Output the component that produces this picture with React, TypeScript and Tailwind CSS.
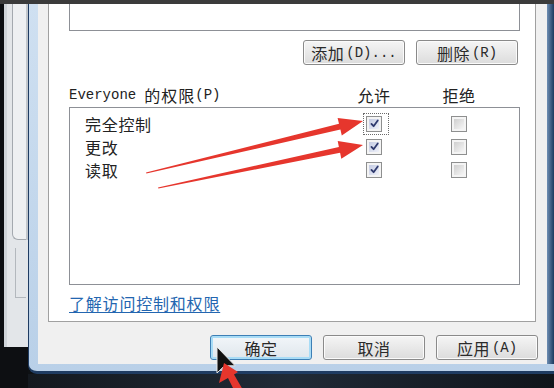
import React from "react";

const cjk = "font-['Noto_Sans_CJK_SC',sans-serif]";
const mono = "font-['Liberation_Mono','Noto_Sans_CJK_SC',monospace]";

function Check({ checked, focused }: { checked: boolean; focused?: boolean }) {
  return (
    <span className="relative flex h-4 w-4 items-center justify-center">
      {focused && <span className="absolute -left-[3px] -top-[3px] h-[22px] w-[26px] border border-dotted border-[#6b6b6b]" />}
      <span className="flex h-4 w-4 items-center justify-center border border-[#8e8f8f] bg-[#f4f4f4] p-[2px]">
        {checked ? (
          <span className="flex h-full w-full items-center justify-center bg-gradient-to-br from-[#c4cbe3] to-[#eef0f8]">
            <svg width="9" height="9" viewBox="0 0 10 10">
              <path d="M1.6 5.4 L4 8 L8.6 1.6" fill="none" stroke="#2f3a6e" strokeWidth="2" strokeLinecap="round" strokeLinejoin="round" />
            </svg>
          </span>
        ) : (
          <span className="h-full w-full bg-gradient-to-br from-[#cfcfcf] to-[#f6f6f6]" />
        )}
      </span>
    </span>
  );
}

function Btn({ label, key2, primary }: { label: string; key2?: string; primary?: boolean }) {
  return (
    <div
      className={
        primary
          ? "flex h-[25px] w-[102px] items-center justify-center rounded-[3px] border border-[#3d7fb5] bg-gradient-to-b from-[#f2f6f9] to-[#dfe6ec] shadow-[inset_0_0_0_2px_#a8dcf6]"
          : "flex h-[25px] w-[102px] items-center justify-center rounded-[3px] border border-[#8a8a8a] bg-gradient-to-b from-[#f5f5f5] to-[#dcdcdc] shadow-[inset_0_0_0_1px_#fbfbfb]"
      }
    >
      <span className={`${cjk} text-[16px] leading-none tracking-[0.5px] text-[#2a2a2a]`}>{label}</span>
      {key2 && <span className={`${mono} ml-[2px] text-[14px] leading-none text-[#2a2a2a]`}>{key2}</span>}
    </div>
  );
}

function BackWindow() {
  return (
    <div className="flex w-[28px] flex-col bg-[#0d0f12]">
      <div className="ml-[4px] flex h-[343px] flex-col border-l-[3px] border-[#cfd4d9] bg-[#e3e6e9] pl-[5px] pr-[2px]">
        <div className="h-[236px] rounded-bl-[6px] border-b border-l border-[#a4a9af] bg-[#eef0f2] shadow-[2px_0_0_#c2c7cc]" />
        <div className="ml-[3px] mt-[8px] h-[50px] border-b border-l border-[#b3b8bd]" />
      </div>
    </div>
  );
}

const rows = [
  { name: "完全控制", allow: true, focused: true },
  { name: "更改", allow: true },
  { name: "读取", allow: true },
];

function TabPage() {
  return (
    <div className="flex h-[318px] w-[488px] flex-col border-x border-b border-[#a0a0a0] bg-white pl-[20px] pr-[15px]">
      <div className="h-[27px] border-x border-b border-[#8d9096] bg-white" />
      <div className="mt-[9px] flex justify-end gap-[11px] pr-[2px]">
        <Btn label="添加" key2="(D)..." />
        <Btn label="删除" key2="(R)" />
      </div>
      <div className="mt-[20px] flex h-[20px] items-center gap-[45px] pr-[41px] text-[#222]">
        <div className="flex flex-1 items-center">
          <span className={`${mono} text-[14px]`}>Everyone</span>
          <span className={`${cjk} ml-[8px] text-[16px] tracking-[1px]`}>的权限</span>
          <span className={`${mono} text-[14px]`}>(P)</span>
        </div>
        <div className={`${cjk} w-10 text-center text-[16px] tracking-[0.5px]`}>允许</div>
        <div className={`${cjk} w-10 text-center text-[16px] tracking-[0.5px]`}>拒绝</div>
      </div>
      <div className="mt-[2px] h-[178px] border border-[#8d9096] bg-white pl-[15px] pr-[40px] pt-[4px]">
        {rows.map((r) => (
          <div key={r.name} className="flex h-[23px] items-center gap-[45px]">
            <div className={`${cjk} flex-1 text-[16px] leading-none tracking-[0.7px] text-[#222]`}>{r.name}</div>
            <div className="flex w-10 justify-center">
              <Check checked={r.allow} focused={r.focused} />
            </div>
            <div className="flex w-10 justify-center">
              <Check checked={false} />
            </div>
          </div>
        ))}
      </div>
      <div className={`${cjk} mt-[8px] h-[20px] text-[16px] leading-[20px] tracking-[0.8px] text-[#2366b0] underline underline-offset-2`}>
        了解访问控制和权限
      </div>
    </div>
  );
}

function Dialog() {
  return (
    <div className="flex flex-1 flex-col">
      <div className="flex h-[370px] rounded-bl-[9px] border-b-[3px] border-l border-[#1f3c62] bg-gradient-to-b from-[#cfe0f1] to-[#b9d0e8] pb-[7px] pl-[9px]">
        <div className="flex w-[509px] flex-col bg-[#f0f0f0] pl-[10px]">
          <TabPage />
          <div className="mt-[13px] flex justify-end gap-[11px] pr-[9px]">
            <Btn label="确定" primary />
            <Btn label="取消" />
            <Btn label="应用" key2="(A)" />
          </div>
        </div>
        <div className="w-[7px] bg-gradient-to-r from-[#6f8fb4] to-[#1d3a5e]" />
      </div>
      <div className="h-[14px] bg-gradient-to-r from-[#14191f] via-[#202a36] to-[#10151b]" />
    </div>
  );
}

function Annotations() {
  return (
    <svg className="pointer-events-none absolute inset-0" width="554" height="388" viewBox="0 0 554 388">
      <polygon points="146,172.4 339,123.7 337.6,117.9 363,121 341.8,135.4 340.4,129.5 146.4,173.6" fill="#e6362d" />
      <polygon points="158,187.4 338.9,147 337.7,141.1 363,145 341.3,158.7 340.1,152.8 158.4,188.6" fill="#e6362d" />
      <polygon
        points="217,347 217,373 223.1,367.2 227.4,377 231.7,375.3 227.4,365.8 235.2,365.8"
        fill="#111"
        stroke="#e8e8e8"
        strokeWidth="1"
      />
      <polygon points="224,363 238,372 234,374.5 243,390 236,394 228,378 219,383" fill="#e6362d" />
    </svg>
  );
}

export default function App() {
  return (
    <div className="relative h-[388px] w-[554px] overflow-hidden bg-[#0e1114]">
      <div className="h-[4px] bg-[#3b3b3b]" />
      <div className="flex h-[384px]">
        <BackWindow />
        <Dialog />
      </div>
      <Annotations />
    </div>
  );
}
